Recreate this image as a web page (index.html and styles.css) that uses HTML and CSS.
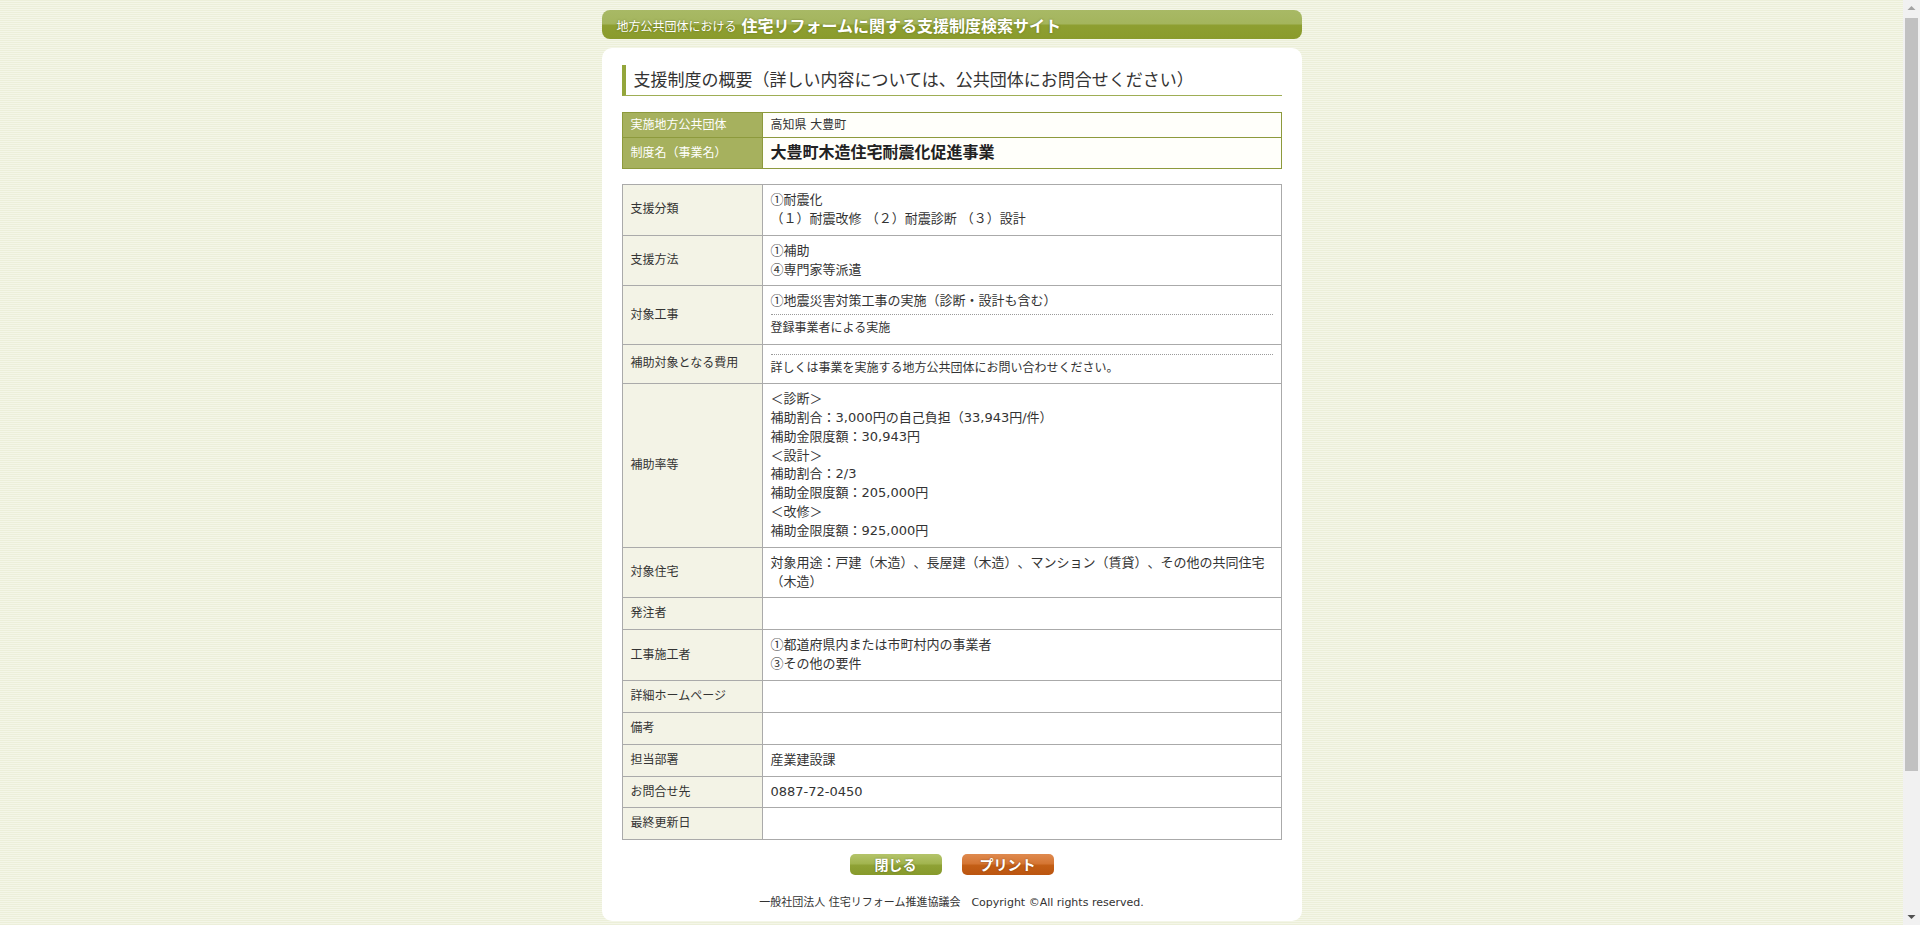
FILE: index.html
```html
<!DOCTYPE html>
<html lang="ja">
<head>
<meta charset="utf-8">
<title>支援制度の概要</title>
<link rel="stylesheet" href="styles.css">
</head>
<body>
<div class="page">
  <header class="site-header">
    <span class="pre">地方公共団体における</span><span class="main">住宅リフォームに関する支援制度検索サイト</span>
  </header>
  <main class="card">
    <h1 class="title">支援制度の概要（詳しい内容については、公共団体にお問合せください）</h1>

    <table class="summary">
      <colgroup><col class="c-label"><col></colgroup>
      <tr class="r1"><th>実施地方公共団体</th><td>高知県 大豊町</td></tr>
      <tr class="r2"><th>制度名（事業名）</th><td class="name">大豊町木造住宅耐震化促進事業</td></tr>
    </table>

    <table class="detail">
      <colgroup><col class="c-label"><col></colgroup>
      <tr><th>支援分類</th><td><span class="cj">①</span>耐震化<br>（１）耐震改修 （２）耐震診断 （３）設計</td></tr>
      <tr><th>支援方法</th><td><span class="cj">①</span>補助<br><span class="cj">④</span>専門家等派遣</td></tr>
      <tr><th>対象工事</th><td><p class="item sep"><span class="cj">①</span>地震災害対策工事の実施（診断・設計も含む）</p><p class="item note">登録事業者による実施</p></td></tr>
      <tr><th>補助対象となる費用</th><td><p class="item sep"></p><p class="item note">詳しくは事業を実施する地方公共団体にお問い合わせください。</p></td></tr>
      <tr><th>補助率等</th><td>＜診断＞<br>補助割合：3,000円の自己負担（33,943円/件）<br>補助金限度額：30,943円<br>＜設計＞<br>補助割合：2/3<br>補助金限度額：205,000円<br>＜改修＞<br>補助金限度額：925,000円</td></tr>
      <tr><th>対象住宅</th><td>対象用途：戸建（木造）、長屋建（木造）、マンション（賃貸）、その他の共同住宅（木造）</td></tr>
      <tr><th>発注者</th><td></td></tr>
      <tr><th>工事施工者</th><td><span class="cj">①</span>都道府県内または市町村内の事業者<br><span class="cj">③</span>その他の要件</td></tr>
      <tr><th>詳細ホームページ</th><td></td></tr>
      <tr><th>備考</th><td></td></tr>
      <tr><th>担当部署</th><td>産業建設課</td></tr>
      <tr><th>お問合せ先</th><td>0887-72-0450</td></tr>
      <tr><th>最終更新日</th><td></td></tr>
    </table>

    <div class="buttons">
      <button class="btn btn-close" type="button">閉じる</button>
      <button class="btn btn-print" type="button">プリント</button>
    </div>

    <p class="footer">一般社団法人 住宅リフォーム推進協議会　Copyright ©All rights reserved.</p>
  </main>
</div>

<div class="scrollbar" aria-hidden="true">
  <svg class="arrow arrow-up" width="17" height="17" viewBox="0 0 17 17"><path d="M4.5 10 L8.5 6 L12.5 10 Z" fill="#a3a3a3"/></svg>
  <div class="track"><div class="thumb"></div></div>
  <svg class="arrow arrow-down" width="17" height="17" viewBox="0 0 17 17"><path d="M4.5 7 L8.5 11 L12.5 7 Z" fill="#505050"/></svg>
</div>
</body>
</html>
```

FILE: styles.css
```css
html {
  background: repeating-linear-gradient(to bottom, #ecefd9 0, #ecefd9 1px, #f4f6e8 1px, #f4f6e8 2px);
}

body {
  margin: 0 17px 0 0;
  font-family: "DejaVu Sans", "Noto Sans CJK JP", sans-serif;
  color: #333;
  font-size: 12px;
  text-spacing-trim: space-all;
}

.cj {
  font-family: "Noto Sans CJK JP", sans-serif;
  line-height: 0;
}

.page {
  width: 700px;
  margin: 10px auto 174px;
}

.site-header {
  height: 29px;
  border-radius: 8px;
  background: linear-gradient(to bottom, #a8b965 0, #a4b55d 48%, #8e9f31 52%, #8a9b2c 100%);
  display: flex;
  align-items: center;
  padding-left: 15px;
  color: #fff;
  text-shadow: 0 0 2px rgba(70, 80, 10, 0.6);
}
.site-header .pre {
  font-size: 12px;
  margin-right: 5px;
  margin-top: 1px;
}
.site-header .main {
  font-size: 16px;
  font-weight: bold;
}

.card {
  display: block;
  margin-top: 9px;
  background: #fff;
  border-radius: 10px;
  padding: 17px 20px 10px;
}

.title {
  margin: 0;
  height: 30px;
  line-height: 30px;
  font-size: 17px;
  font-weight: normal;
  color: #333;
  border-left: 4px solid #94a63b;
  border-bottom: 1px solid #9fae55;
  padding-left: 8px;
}

table {
  width: 100%;
  border-collapse: collapse;
  table-layout: fixed;
}
.c-label {
  width: 140px;
}
th {
  text-align: left;
  font-weight: normal;
}

.summary {
  margin-top: 16px;
}
.summary th,
.summary td {
  border: 1px solid #8d9a3c;
  padding: 0 8px;
  vertical-align: middle;
}
.summary th {
  background: #a6b15e;
  color: #fff;
}
.summary td {
  background: #fffffa;
}
.summary .r1 th,
.summary .r1 td {
  height: 24px;
  line-height: 18px;
}
.summary .r2 th,
.summary .r2 td {
  height: 30px;
  line-height: 24px;
}
.summary .name {
  font-size: 16px;
  font-weight: bold;
  color: #222;
}

.detail {
  margin-top: 15px;
}
.detail th,
.detail td {
  border: 1px solid #aaaaaa;
  padding: 6px 8px;
  line-height: 18.85px;
  vertical-align: middle;
}
.detail th {
  background: #f3f3e6;
  font-size: 12px;
}
.detail td {
  background: #fff;
  font-size: 13px;
}
.detail th:empty,
.detail td:empty {
  height: 18.85px;
}

.item {
  margin: 0;
}
.item.sep {
  padding-bottom: 3px;
  border-bottom: 1px dotted #9a9a9a;
  margin-bottom: 5px;
}
.item.note {
  font-size: 12px;
  line-height: 17.4px;
}

.buttons {
  margin-top: 14px;
  display: flex;
  justify-content: center;
  gap: 20px;
}
.btn {
  width: 92px;
  height: 21px;
  border: none;
  border-radius: 5px;
  padding: 0;
  font-family: "Noto Sans CJK JP", sans-serif;
  font-size: 14px;
  font-weight: bold;
  line-height: 21px;
  color: #fff;
  text-shadow: 0 0 2px rgba(0, 0, 0, 0.35);
  cursor: pointer;
}
.btn-close {
  background: linear-gradient(to bottom, #b4c46a 0, #a2b550 45%, #8ea134 55%, #879a2c 100%);
}
.btn-print {
  background: linear-gradient(to bottom, #df8a4f 0, #d57634 45%, #c35e15 55%, #bb5510 100%);
}

.footer {
  margin: 20px 0 0;
  text-align: center;
  font-size: 11px;
  line-height: 16px;
  color: #333;
}

/* simulated classic browser scrollbar */
.scrollbar {
  position: fixed;
  top: 0;
  right: 0;
  width: 17px;
  height: 100vh;
  background: #f1f1f1;
  display: flex;
  flex-direction: column;
}
.arrow {
  flex: none;
  display: block;
}
.track {
  flex: 1;
  padding-top: 1px;
}
.thumb {
  margin: 0 2px;
  height: 753px;
  background: #c1c1c1;
}
```
